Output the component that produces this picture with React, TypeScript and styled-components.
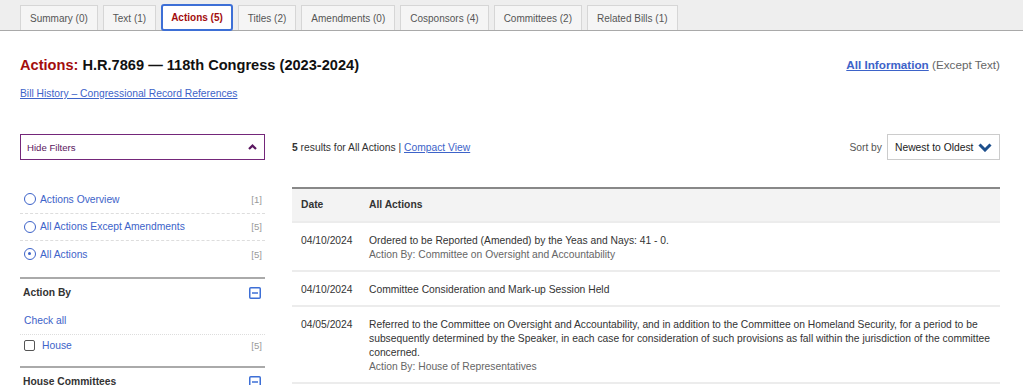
import React from 'react';
import styled, { createGlobalStyle } from 'styled-components';

const GlobalStyle = createGlobalStyle`
  html, body {
    margin: 0;
    padding: 0;
    background: #fff;
    font-family: 'Liberation Sans', Arial, sans-serif;
    color: #222;
  }
  a { color: #3d63c9; }
`;

const Page = styled.div`
  width: 1023px;
  height: 385px;
  overflow: hidden;
`;

const TabBar = styled.div`
  display: flex;
  align-items: flex-end;
  gap: 5px;
  height: 30px;
  padding-left: 20px;
  background: #eeeeee;
  border-bottom: 1px solid #a9a9a9;
`;

const Tab = styled.div<{ $active?: boolean }>`
  display: flex;
  align-items: center;
  box-sizing: border-box;
  height: ${(p) => (p.$active ? '27px' : '25px')};
  padding: 0 ${(p) => (p.$active ? '8px' : '9px')};
  margin-bottom: ${(p) => (p.$active ? '-1px' : '0')};
  font-size: 10px;
  font-weight: ${(p) => (p.$active ? 'bold' : 'normal')};
  color: ${(p) => (p.$active ? '#a30d0d' : '#555')};
  background: ${(p) => (p.$active ? '#fff' : '#f5f5f5')};
  border: ${(p) => (p.$active ? '2px solid #3d6fd6' : '1px solid #d6d6d6')};
  border-bottom: ${(p) => (p.$active ? '2px solid #3d6fd6' : 'none')};
  border-radius: ${(p) => (p.$active ? '3px' : '0')};
`;

const Header = styled.div`
  display: flex;
  justify-content: space-between;
  align-items: flex-start;
  padding: 25px 23px 0 20px;
`;

const Title = styled.h1`
  margin: 0;
  font-size: 14.6px;
  font-weight: bold;
  color: #111;
  line-height: 18px;
  span { color: #a30d0d; }
`;

const SubLink = styled.a`
  display: block;
  margin-top: 13px;
  font-size: 10.3px;
  line-height: 13px;
`;

const AllInfo = styled.div`
  font-size: 11.7px;
  color: #666;
  line-height: 16px;
  margin-top: 1px;
  a { font-weight: bold; }
`;

const Body = styled.div`
  display: grid;
  grid-template-columns: 245px 708px;
  column-gap: 27px;
  padding: 34px 0 0 20px;
  font-size: 10.3px;
`;

const Sidebar = styled.div`
  display: flex;
  flex-direction: column;
`;

const HideFilters = styled.div`
  display: flex;
  justify-content: space-between;
  align-items: center;
  box-sizing: border-box;
  height: 26px;
  padding: 0 7px 0 6px;
  border: 1px solid #74277a;
  font-size: 9.6px;
  color: #5b1760;
`;

const RadioList = styled.div`
  margin-top: 26px;
`;

const FilterRow = styled.div<{ $dashed?: boolean; $h?: number }>`
  display: flex;
  align-items: center;
  justify-content: space-between;
  height: ${(p) => p.$h ?? 26.5}px;
  padding: 0 3px 0 4px;
  border-bottom: ${(p) => (p.$dashed ? '1px dashed #ddd' : 'none')};
  color: #3d63c9;
`;

const Label = styled.span`
  display: flex;
  align-items: center;
  gap: 4px;
`;

const Radio = styled.span<{ $checked?: boolean }>`
  position: relative;
  box-sizing: border-box;
  width: 12px;
  height: 12px;
  border: 1.5px solid #3d63c9;
  border-radius: 50%;
  &::after {
    content: '';
    display: ${(p) => (p.$checked ? 'block' : 'none')};
    position: absolute;
    left: 3px;
    top: 3px;
    width: 3px;
    height: 3px;
    border-radius: 50%;
    background: #3d63c9;
  }
`;

const Checkbox = styled.span`
  box-sizing: border-box;
  width: 11px;
  height: 11px;
  border: 1px solid #555;
  border-radius: 2px;
  margin-right: 3px;
`;

const Count = styled.span`
  font-size: 9.6px;
  color: #999;
`;

const Section = styled.div`
  margin-top: 9px;
  border-top: 2px solid #aaa;
`;

const SectionHead = styled.div`
  display: flex;
  justify-content: space-between;
  align-items: center;
  height: 28px;
  padding: 0 4px 0 3px;
  font-weight: bold;
  color: #333;
`;

const CheckAll = styled.div`
  color: #3d63c9;
  height: 27px;
  line-height: 27px;
  padding-left: 4px;
  border-bottom: 1px dotted #ddd;
`;

const Main = styled.div`
  display: flex;
  flex-direction: column;
`;

const ResultsBar = styled.div`
  display: flex;
  justify-content: space-between;
  align-items: center;
  height: 26px;
  color: #333;
`;

const SortBox = styled.div`
  display: flex;
  align-items: center;
  gap: 5px;
  color: #555;
`;

const Select = styled.div`
  display: flex;
  align-items: center;
  justify-content: space-between;
  box-sizing: border-box;
  width: 113px;
  height: 26px;
  padding: 0 7px 0 7px;
  border: 1px solid #ccc;
  color: #222;
  background: #fff;
`;

const Table = styled.div`
  margin-top: 27px;
  border-top: 2px solid #888;
`;

const Row = styled.div<{ $head?: boolean }>`
  display: grid;
  grid-template-columns: 68px 1fr;
  box-sizing: border-box;
  padding: ${(p) => (p.$head ? '0 9px' : '11px 2px 8px 9px')};
  min-height: ${(p) => (p.$head ? '34px' : 'auto')};
  align-items: ${(p) => (p.$head ? 'center' : 'start')};
  background: ${(p) => (p.$head ? '#f3f3f3' : '#fff')};
  font-weight: ${(p) => (p.$head ? 'bold' : 'normal')};
  color: #333;
  line-height: 14px;
  border-bottom: 2px solid #ececec;
`;

const ActionBy = styled.div`
  color: #666;
`;

const ChevronUp = () => (
  <svg width="9" height="6" viewBox="0 0 9 6">
    <path d="M1 5 L4.5 1.6 L8 5" fill="none" stroke="#5b1760" strokeWidth="2.2" />
  </svg>
);

const ChevronDown = () => (
  <svg width="14" height="9" viewBox="0 0 14 9">
    <path d="M1.5 1.5 L7 7 L12.5 1.5" fill="none" stroke="#1d4f8c" strokeWidth="3" />
  </svg>
);

const MinusBox = () => (
  <svg width="12" height="12" viewBox="0 0 12 12">
    <rect x="0.75" y="0.75" width="10.5" height="10.5" rx="1" fill="none" stroke="#3d6fd6" strokeWidth="1.5" />
    <path d="M3 6 H9" stroke="#3d6fd6" strokeWidth="1.5" />
  </svg>
);

const tabs = [
  'Summary (0)',
  'Text (1)',
  'Actions (5)',
  'Titles (2)',
  'Amendments (0)',
  'Cosponsors (4)',
  'Committees (2)',
  'Related Bills (1)',
];

const filters = [
  { label: 'Actions Overview', count: 1 },
  { label: 'All Actions Except Amendments', count: 5 },
  { label: 'All Actions', count: 5, checked: true },
];

const actions = [
  {
    date: '04/10/2024',
    text: 'Ordered to be Reported (Amended) by the Yeas and Nays: 41 - 0.',
    by: 'Committee on Oversight and Accountability',
  },
  {
    date: '04/10/2024',
    text: 'Committee Consideration and Mark-up Session Held',
  },
  {
    date: '04/05/2024',
    text: 'Referred to the Committee on Oversight and Accountability, and in addition to the Committee on Homeland Security, for a period to be subsequently determined by the Speaker, in each case for consideration of such provisions as fall within the jurisdiction of the committee concerned.',
    by: 'House of Representatives',
  },
];

const App: React.FC = () => {
  return (
    <Page>
      <GlobalStyle />
      <TabBar>
        {tabs.map((t) => (
          <Tab key={t} $active={t === 'Actions (5)'}>
            {t}
          </Tab>
        ))}
      </TabBar>

      <Header>
        <div>
          <Title>
            <span>Actions:</span> H.R.7869 — 118th Congress (2023-2024)
          </Title>
          <SubLink href="#">Bill History – Congressional Record References</SubLink>
        </div>
        <AllInfo>
          <a href="#">All Information</a> (Except Text)
        </AllInfo>
      </Header>

      <Body>
        <Sidebar>
          <HideFilters>
            Hide Filters
            <ChevronUp />
          </HideFilters>
          <RadioList>
            {filters.map((f, i) => (
              <FilterRow key={f.label} $dashed={i < filters.length - 1}>
                <Label>
                  <Radio $checked={f.checked} />
                  {f.label}
                </Label>
                <Count>[{f.count}]</Count>
              </FilterRow>
            ))}
          </RadioList>
          <Section>
            <SectionHead>
              Action By
              <MinusBox />
            </SectionHead>
            <CheckAll>Check all</CheckAll>
            <FilterRow $h={22}>
              <Label>
                <Checkbox />
                House
              </Label>
              <Count>[5]</Count>
            </FilterRow>
          </Section>
          <Section>
            <SectionHead>
              House Committees
              <MinusBox />
            </SectionHead>
          </Section>
        </Sidebar>

        <Main>
          <ResultsBar>
            <span>
              <b>5</b> results for All Actions | <a href="#">Compact View</a>
            </span>
            <SortBox>
              Sort by
              <Select>
                Newest to Oldest
                <ChevronDown />
              </Select>
            </SortBox>
          </ResultsBar>
          <Table>
            <Row $head>
              <div>Date</div>
              <div>All Actions</div>
            </Row>
            {actions.map((a, i) => (
              <Row key={i}>
                <div>{a.date}</div>
                <div>
                  {a.text}
                  {a.by && <ActionBy>Action By: {a.by}</ActionBy>}
                </div>
              </Row>
            ))}
          </Table>
        </Main>
      </Body>
    </Page>
  );
};

export default App;
